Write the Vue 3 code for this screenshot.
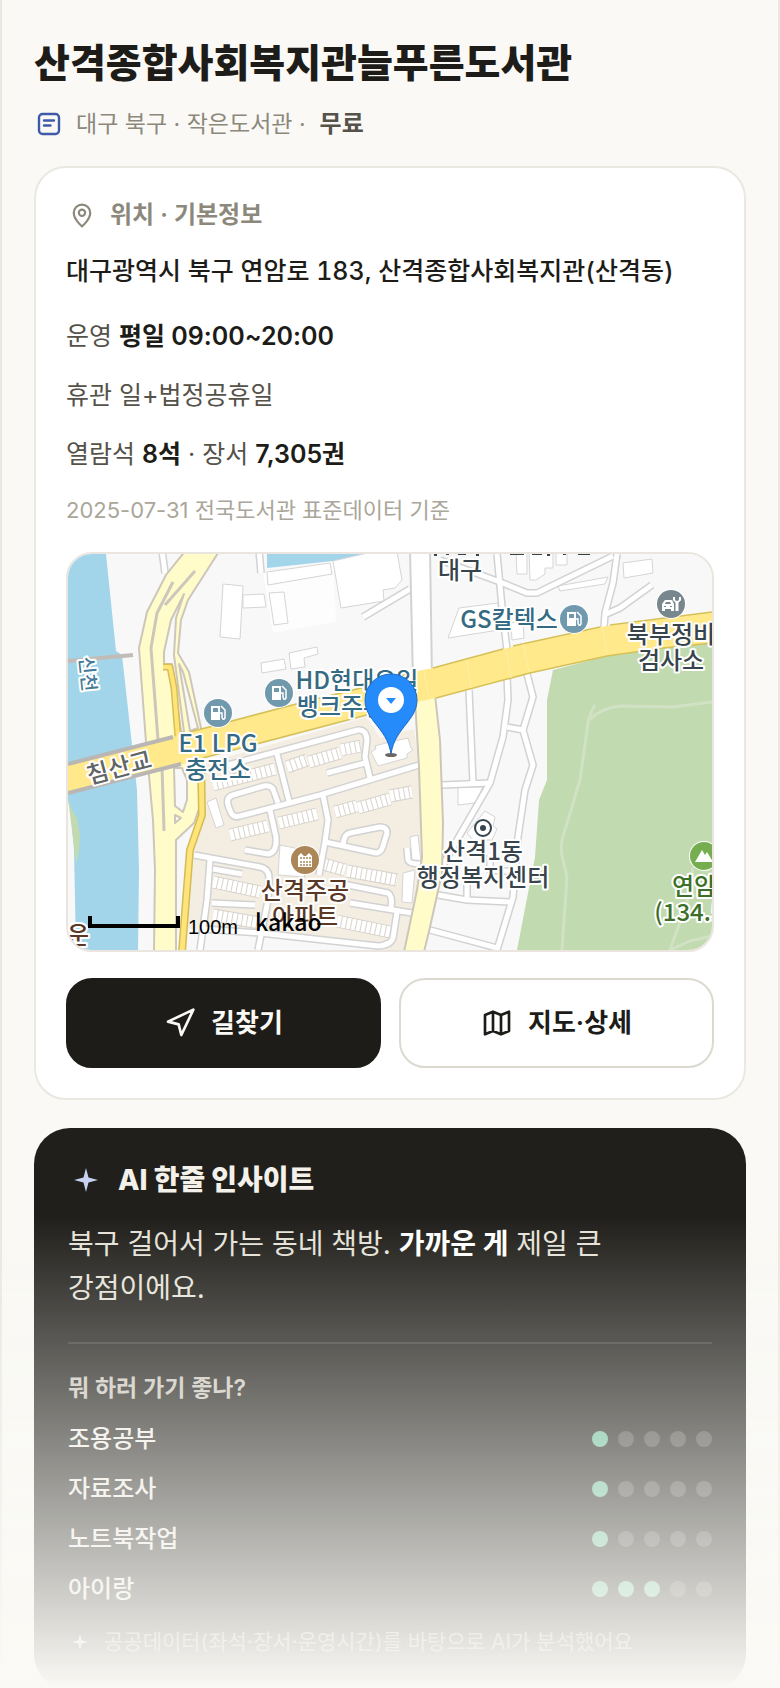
<script setup>
const purposes = [
  { name: '조용공부', score: 1 },
  { name: '자료조사', score: 1 },
  { name: '노트북작업', score: 1 },
  { name: '아이랑', score: 3 },
]

const streets = [
  'M220 767L358 730Q366 729 367 740L365 757L370 778',
  'M278 803L273 789Q270 785 264 786L233 795Q226 797 228 805L231 813Q234 818 240 816L320 795L419 765',
  'M277 754L289 801',
  'M327 773L365 763',
  'M270 810L276 837Q277 853 268 854L245 850',
  'M323 795L328 820L325 842L319 875',
  'M325 842L376 853Q381 853 383 846L387 833Q387 827 380 827L350 833Q344 834 343 845',
  'M194 855L260 867Q269 869 269 878L268 900L258 950',
  'M210 860L207 900L200 950',
  'M213 869L242 874',
  'M212 903L255 905',
  'M203 929L260 933L378 946Q384 946 388 943',
  'M343 884L388 893Q393 896 391 908',
  'M350 903L412 913',
  'M397 912L393 938Q391 944 383 945',
  'M407 848L408 860Q409 864 421 864',
  'M442 785L490 783',
  'M469 690L473 783',
  'M507 676L508 700L503 737L490 783L457 840L443 865',
  'M527 674L533 697L523 730L533 765L525 790L518 837L513 897L497 950',
  'M507 727L523 730',
  'M438 895L467 900L510 902',
  'M467 900V873M490 855V870L515 872',
  'M430 930L497 948',
  'M440 560L500 582L527 593H537L613 556',
  'M497 554L502 607L507 650',
  'M617 554L613 583L605 613L604 628',
  'M604 615L620 608L652 585',
  'M363 617L410 589',
  'M162 550L165 573',
  'M259 550L261 573',
]

const buildings = [
  'M223 584L243 586L240 639L220 637Z',
  'M243 595L264 594L266 607L243 608Z',
  'M269 593L284 592L288 623L274 625Z',
  'M267 572L330 563L332 574L268 585Z',
  'M333 561L372 552H397L402 580L395 588L383 590L384 601L341 608Z',
  'M261 663L284 659L286 669L262 673Z',
  'M289 653L317 647L318 654L304 658L305 667L291 669Z',
  'M516 552H527V574H517Z',
  'M529 552H553V568H545V574L536 580H530Z',
  'M556 552H567V565H556Z',
  'M558 586L608 577L605 584L560 591Z',
  'M623 563L652 559L653 573L624 578Z',
  'M459 608L498 603L499 630L448 638Z',
  'M511 623L523 620L524 638L512 640Z',
  'M458 787H483L475 803L458 805Z',
  'M485 811L495 817L493 826L497 829L492 840H473L467 833Z',
  'M410 837L418 835L421 862L412 861Z',
  'M403 873L415 870L412 903L402 902Z',
  'M207 802L216 798L224 825L216 828Z',
  'M280 845L295 848L305 877L278 875Z',
  'M371 752L376 749L375 746L386 743L408 738L411 748L413 750L407 754V758L378 766Z',
]

const terraces = [
  'M213 785L275 769',
  'M287 767L307 760', 'M309 762L340 753', 'M341 750L361 746',
  'M335 812L357 806', 'M358 808L390 799', 'M390 796L412 792',
  'M279 823L317 814', 'M230 835L268 826',
  'M213 882L260 892', 'M213 915L260 923',
  'M323 864L345 870', 'M347 871L397 880', 'M337 921L390 932',
]

const stations = [
  { x: 279, y: 693 },
  { x: 218, y: 713 },
  { x: 574, y: 619 },
]

const labels = [
  { t: '대구', x: 460, y: 579, c: 'dark' },
  { t: 'GS칼텍스', x: 509, y: 628, c: 'fuel' },
  { t: 'HD현대오일', x: 357, y: 689, c: 'fuel' },
  { t: '뱅크주유소', x: 352, y: 715, c: 'fuel' },
  { t: 'E1 LPG', x: 218, y: 752, c: 'fuel' },
  { t: '충전소', x: 218, y: 778, c: 'fuel' },
  { t: '북부정비', x: 671, y: 643, c: 'dark' },
  { t: '검사소', x: 671, y: 669, c: 'dark' },
  { t: '산격1동', x: 483, y: 860, c: 'dark' },
  { t: '행정복지센터', x: 483, y: 886, c: 'dark' },
  { t: '연암산', x: 705, y: 895, c: 'park' },
  { t: '(134.5m)', x: 705, y: 921, c: 'park' },
  { t: '산격주공', x: 305, y: 899, c: 'home' },
  { t: '아파트', x: 305, y: 925, c: 'home' },
  { t: '운', x: 78, y: 944, c: 'home' },
]
</script>

<template>
  <main class="page">
    <header class="head">
      <h1>산격종합사회복지관늘푸른도서관</h1>
      <p class="meta">
        <svg class="meta-icon" viewBox="0 0 24 24" aria-hidden="true">
          <rect x="2" y="2" width="20" height="20" rx="3.5" />
          <path d="M7 8.5h10M7 13.5h6.500" />
        </svg>
        <span>대구 북구 · 작은도서관 ·</span>
        <strong>무료</strong>
      </p>
    </header>

    <section class="card">
      <h2 class="card-title">
        <svg class="pin-icon" viewBox="0 0 24 24" aria-hidden="true">
          <path d="M12 22.500s7.600-6.200 7.600-12.500a7.600 7.600 0 0 0-15.200 0c0 6.300 7.600 12.500 7.600 12.500z" />
          <circle cx="12" cy="10" r="2.900" />
        </svg>
        위치 · 기본정보
      </h2>
      <p class="address">대구광역시 북구 연암로 183, 산격종합사회복지관(산격동)</p>
      <div class="facts">
        <p>운영 <b>평일 09:00~20:00</b></p>
        <p>휴관 일+법정공휴일</p>
        <p>열람석 <b>8석</b> · 장서 <b>7,305권</b></p>
      </div>
      <p class="source">2025-07-31 전국도서관 표준데이터 기준</p>

      <div class="map">
        <svg viewBox="68 554 644 396" role="img" aria-label="도서관 주변 지도">
          <rect x="68" y="554" width="644" height="396" fill="#f8f8f8" />
          <path d="M68 554H106L116 651L122 655L132 745L137 790L139 870L138 950H76L74 850L71 815L68 800Z" fill="#a2d5ea" />
          <path d="M68 798L72 810L77 818L80 835L79 852L76 864L72 830Z" fill="#c2dab0" />
          <path d="M263 573L333 561L336 622L273 633Z" fill="#fdfdfd" />
          <path d="M267 554H372L333 561L267 568Z" fill="#a2d5ea" />
          <path d="M203 764L367 717L380 738L414 729L420 767L422 857L417 890L404 950H390L260 935L185 928L195 850L204 815Z" fill="#f3ede2" />
          <path d="M553 670L607 656L663 648L712 643V950H517L535 857L539 800L547 780V700Z" fill="#c2dab0" />
          <g fill="none" stroke="#d1e2c4" stroke-width="3">
            <path d="M595 705Q588 716 587 730L580 780L562 840Q560 850 563 860L567 877L562 950" />
            <path d="M588 721Q600 708 620 706L673 707L712 702" />
            <path d="M670 950L687 903L693 867M670 950L690 941L712 936" />
          </g>

          <path v-for="b in buildings" :key="b" :d="b" class="building" />
          <g v-for="t in terraces" :key="t" fill="none">
            <path :d="t" stroke="#d8d3cc" stroke-width="13" />
            <path :d="t" stroke="#fff" stroke-width="11" stroke-dasharray="4 1" />
          </g>
          <g fill="none" stroke-linejoin="round">
            <path v-for="s in streets" :key="s" :d="s" stroke="#d2d2d2" stroke-width="8" />
            <path v-for="s in streets" :key="s" :d="s" stroke="#fff" stroke-width="5" />
          </g>
          <path d="M410 550L413 680H432L430 550Z" fill="#fff" stroke="#d2d2d2" stroke-width="2" />

          <path d="M68 661L133 655" stroke="#c3bbb6" stroke-width="4" />
          <g fill="#fffcc9" stroke="#cdc6ba" stroke-width="2" stroke-linejoin="round">
            <path d="M186 550L166 575L147 612L139 648L146 742L153 820L155 870L154 952H176L176 840L194 823L202 800V760L201 728L189 672L178 653L181 620L188 600L220 550Z" />
            <path d="M415 700L419 767L422 857L417 890L404 952H424L430 927L442 873L443 823L440 740L435 695Z" />
          </g>
          <g fill="#f8f8f8" stroke="#cdc6ba" stroke-width="2" stroke-linejoin="round">
            <path d="M184 594L176 610L171 620L164 652V664H172L181 732H184L174 655L176 618Z" />
            <path d="M179 664L183 672L198 728L190 731Z" />
            <path d="M174 768H182L187 780V800L183 812L175 806Z" />
            <path d="M175 815L181 818L175 823Z" />
          </g>
          <g fill="none" stroke="#cdc6ba" stroke-width="3">
            <path d="M173 582L157 613L151 648L158 740" />
            <path d="M195 571L165 605" />
            <path d="M162 766L164 831" />
          </g>
          <g fill="none" stroke-linejoin="round">
            <path d="M163 667H170L174 688L178 738" stroke="#d7bd57" stroke-width="7" />
            <path d="M163 667H170L174 688L178 738" stroke="#ffe478" stroke-width="4" />
            <path d="M201 760L202 815L190 850L186 900L182 952" stroke="#d3bb55" stroke-width="8" />
            <path d="M201 760L202 815L190 850L186 900L182 952" stroke="#ffe47a" stroke-width="5" />
          </g>

          <path d="M68 764L173 737L230 721L300 703L365 687L418 671L433 668L515 646L600 627L712 612V643L663 648L607 656L530 673L435 698L417 702L363 716L220 753L180 765L68 793Z" fill="#ffe98a" />
          <g fill="none" stroke="#d5c158" stroke-width="1.500">
            <path d="M190 732L300 703L365 687L413 672M433 668L503 649M513 646L600 627M610 625L712 612" />
            <path d="M203 758L363 716L415 702M436 698L530 673L607 656L663 648L712 643" />
          </g>
          <path d="M68 764L173 737M68 793L181 764" fill="none" stroke="#b9b6b4" stroke-width="4" />
          <path d="M467 660L471 688M506 650L511 678M523 644L529 672M602 627L607 655M424 671L429 698" stroke="#fff0a8" stroke-width="1" />

          <g class="cut-label">
            <path d="M434 554h3v2h-3zM446 554h3v1h-3zM458 554h8v1h-8zM476 554h3v2h-3zM510 554h14v1h-14zM532 554h10v1h-10zM547 554h3v2h-3zM563 554h3v1h-3zM578 554h12v1h-12z" />
          </g>

          <text v-for="l in labels" :key="l.t" :x="l.x" :y="l.y" :class="['label', l.c]">{{ l.t }}</text>
          <text class="label bridge" x="0" y="9" transform="translate(119 767) rotate(-15)">침산교</text>
          <text class="label river" x="0" y="7" transform="translate(88 674) rotate(84)">신천</text>

          <g v-for="s in stations" :key="s.x" :transform="`translate(${s.x} ${s.y})`">
            <circle r="15" fill="#fff" />
            <circle r="14" fill="#7199ad" />
            <path d="M-7-7H2V7H-7Z" fill="#fff" />
            <path d="M-5-5H0V-1H-5Z" fill="#7199ad" />
            <path d="M3-7L7-3V5Q5 8 4 4V0H2" fill="none" stroke="#fff" stroke-width="1.500" />
          </g>
          <g transform="translate(671 604)">
            <circle r="15" fill="#fff" />
            <circle r="14" fill="#78868e" />
            <path d="M-9 7V0L-6-4H1L3 0V7H0V5H-6V7Z" fill="#fff" />
            <path d="M-6 0L-5-2H-1L0 0ZM-7 2h2v1h-2zM-1 2h2v1h-2z" fill="#78868e" />
            <path d="M6 7V-2" fill="none" stroke="#fff" stroke-width="3" />
            <path d="M3-7V-4Q6 0 9-4V-7" fill="none" stroke="#fff" stroke-width="2" />
          </g>
          <g transform="translate(305 860)">
            <circle r="15" fill="#fff" />
            <circle r="14" fill="#ab8657" />
            <path d="M-7 7V-4L-4-7L-1-4H1L4-7L7-4V7Z" fill="#fff" />
            <path d="M-5-2H6M-5 2H6M-5 5H6" stroke="#ab8657" stroke-width="1.500" stroke-dasharray="2 1" />
          </g>
          <g transform="translate(704 856)">
            <circle r="15" fill="#fff" />
            <circle r="14" fill="#74ae50" />
            <path d="M-9 6L-2-6L1-1L3-4L9 6Z" fill="#fff" />
          </g>
          <circle cx="483" cy="828" r="8" fill="#fff" stroke="#37444c" stroke-width="2" />
          <circle cx="483" cy="828" r="3" fill="#37444c" />

          <ellipse cx="391" cy="755" rx="6" ry="2" fill="#6b6661" />
          <path d="M391 754C389 740 382 732 375 723C368 714 365 708 365 700A26 26 0 0 1 417 700C417 708 414 714 407 723C400 732 393 740 391 754Z" fill="#258bfb" stroke="#1a6bc7" stroke-width="1" />
          <circle cx="391" cy="700" r="13" fill="#fff" />
          <path d="M386 698H396L391 704Z" fill="#258bfb" />

          <path d="M90 916V926H178V916" fill="none" stroke="#000" stroke-width="4" />
          <text class="scale" x="188" y="934">100m</text>
          <text class="brand" x="255" y="931">kakao</text>
        </svg>
      </div>

      <div class="actions">
        <button type="button" class="btn solid">
          <svg viewBox="0 0 24 24" aria-hidden="true"><path d="M3 11L22 2L13 21L11 13Z" /></svg>
          길찾기
        </button>
        <button type="button" class="btn">
          <svg viewBox="0 0 24 24" aria-hidden="true"><path d="M3 6L9 3.500L15 6L21 3.500V18L15 20.500L9 18L3 20.500ZM9 3.500V18M15 6V20.500" /></svg>
          지도·상세
        </button>
      </div>
    </section>

    <section class="insight">
      <h2>
        <svg class="spark" viewBox="0 0 24 24" aria-hidden="true"><path d="M12 0L14.500 9.500L24 12L14.500 14.500L12 24L9.500 14.500L0 12L9.500 9.500Z" /></svg>
        AI 한줄 인사이트
      </h2>
      <p class="summary">북구 걸어서 가는 동네 책방. <b>가까운 게</b> 제일 큰 강점이에요.</p>
      <h3>뭐 하러 가기 좋나?</h3>
      <ul>
        <li v-for="p in purposes" :key="p.name">
          <span>{{ p.name }}</span>
          <span class="dots" role="img" :aria-label="`5점 중 ${p.score}점`">
            <i v-for="n in 5" :key="n" :class="{ on: n <= p.score }"></i>
          </span>
        </li>
      </ul>
      <p class="note">
        <svg viewBox="0 0 24 24" aria-hidden="true"><path d="M12 0L14.500 9.500L24 12L14.500 14.500L12 24L9.500 14.500L0 12L9.500 9.500Z" /></svg>
        공공데이터(좌석·장서·운영시간)를 바탕으로 AI가 분석했어요
      </p>
    </section>
    <div class="fade"></div>
  </main>
</template>

<style>
body {
  background: #faf9f5;
}
</style>

<style scoped>
.page {
  box-sizing: border-box;
  height: 100vh;
  overflow: hidden;
  padding: 36px 32px 0;
  border: solid #eae8e0;
  border-width: 0 2px;
  background: #faf9f5;
  color: #1d1c18;
  font-family: Inter, "Noto Sans CJK KR", sans-serif;
}
h1, h2, h3, p, ul {
  margin: 0;
  padding: 0;
}
svg {
  flex: none;
}
h1 {
  font-size: 39px;
  line-height: 54px;
  font-weight: 800;
}
.meta {
  display: flex;
  align-items: center;
  margin-top: 18px;
  line-height: 32px;
  font-size: 23px;
  color: #8c887c;
}
.meta-icon {
  width: 24px;
  height: 24px;
  margin: 0 15px 0 3px;
  fill: none;
  stroke: #3f5aa9;
  stroke-width: 2.4;
  stroke-linecap: round;
}
.meta strong {
  margin-left: 14px;
  font-size: 24px;
  font-weight: 600;
  color: #55524a;
}
.card {
  margin-top: 26px;
  padding: 30px;
  border: 2px solid #eae8e1;
  border-radius: 32px;
  background: #fff;
}
.card-title {
  display: flex;
  align-items: center;
  line-height: 34px;
  font-size: 24px;
  font-weight: 600;
  color: #8c887c;
}
.pin-icon {
  width: 26px;
  height: 26px;
  margin: 0 15px 0 3px;
  fill: none;
  stroke: #8c887c;
  stroke-width: 2;
}
.address {
  margin-top: 18px;
  line-height: 42px;
  font-size: 25px;
  font-weight: 500;
  font-variant-numeric: tabular-nums;
}
.facts {
  display: flex;
  flex-direction: column;
  gap: 19px;
  margin-top: 24px;
  line-height: 40px;
  font-size: 25px;
  color: #55524a;
}
.facts b {
  font-weight: 600;
  color: #1d1c18;
}
.source {
  margin-top: 19px;
  line-height: 34px;
  font-size: 22px;
  color: #aaa69a;
}
.map {
  margin-top: 25px;
  overflow: hidden;
  border: 2px solid #eae5df;
  border-radius: 26px;
}
.map svg {
  display: block;
  width: 100%;
}
.building {
  fill: #fff;
  stroke: #d5d5d5;
  stroke-width: 1;
}
.label {
  font-family: "Noto Sans CJK KR", sans-serif;
  font-size: 24px;
  font-weight: 500;
  text-anchor: middle;
  stroke: #fff;
  stroke-width: 4px;
  stroke-linejoin: round;
  paint-order: stroke;
}
.dark { fill: #37444c; }
.fuel { fill: #356a83; }
.park { fill: #3c6f27; }
.home { fill: #593825; }
.bridge { fill: #5f6467; }
.river {
  fill: #457b96;
  font-size: 19px;
}
.cut-label {
  fill: #37444c;
}
.scale {
  font-family: "Liberation Sans", sans-serif;
  font-size: 20px;
}
.brand {
  font-family: "Noto Sans CJK KR", sans-serif;
  font-size: 23px;
  font-weight: 500;
}
.actions {
  display: grid;
  grid-template-columns: 1fr 1fr;
  gap: 18px;
  margin-top: 26px;
}
.btn {
  display: flex;
  align-items: center;
  justify-content: center;
  gap: 15px;
  height: 90px;
  border: 2px solid #dbd9d0;
  border-radius: 26px;
  background: #fff;
  color: #1d1c18;
  font-family: inherit;
  font-size: 26px;
  line-height: 40px;
  font-weight: 600;
}
.btn svg {
  width: 32px;
  height: 32px;
  fill: none;
  stroke: currentColor;
  stroke-width: 2;
  stroke-linejoin: round;
}
.solid {
  border-color: #1d1c18;
  background: #1d1c18;
  color: #faf9f5;
}
.insight {
  margin-top: 28px;
  padding: 34px 34px 32px;
  border-radius: 36px;
  background: #201f1b;
  color: #f3f1ea;
}
.insight h2 {
  display: flex;
  align-items: center;
  line-height: 36px;
  font-size: 28px;
  font-weight: 800;
}
.spark {
  width: 24px;
  height: 24px;
  margin: 0 20px 0 6px;
  fill: #c7d2f2;
}
.summary {
  margin-top: 24px;
  padding-bottom: 32px;
  border-bottom: 2px solid #393834;
  line-height: 44px;
  font-size: 28px;
  color: #e5e2d9;
  word-break: keep-all;
}
.summary b {
  font-weight: 700;
  color: #fff;
}
h3 {
  margin-top: 28px;
  line-height: 32px;
  font-size: 23px;
  font-weight: 600;
  color: #c9c6bc;
}
ul {
  margin-top: 10px;
  list-style: none;
}
li {
  display: flex;
  align-items: center;
  justify-content: space-between;
  line-height: 50px;
  font-size: 24px;
  font-weight: 500;
  color: #efede6;
}
.dots {
  display: flex;
  gap: 10px;
}
.dots i {
  width: 16px;
  height: 16px;
  border-radius: 50%;
  background: #4a4945;
}
.dots .on {
  background: #6cbf9b;
}
.note {
  display: flex;
  align-items: center;
  margin-top: 12px;
  line-height: 32px;
  font-size: 21px;
  color: #a19d92;
}
.note svg {
  width: 16px;
  height: 16px;
  margin: 0 16px 0 4px;
  fill: #c7d2f2;
}
.fade {
  position: fixed;
  inset: auto 0 0;
  height: 28vh;
  background: linear-gradient(rgba(250, 249, 245, 0), #faf9f5);
  pointer-events: none;
}
</style>
